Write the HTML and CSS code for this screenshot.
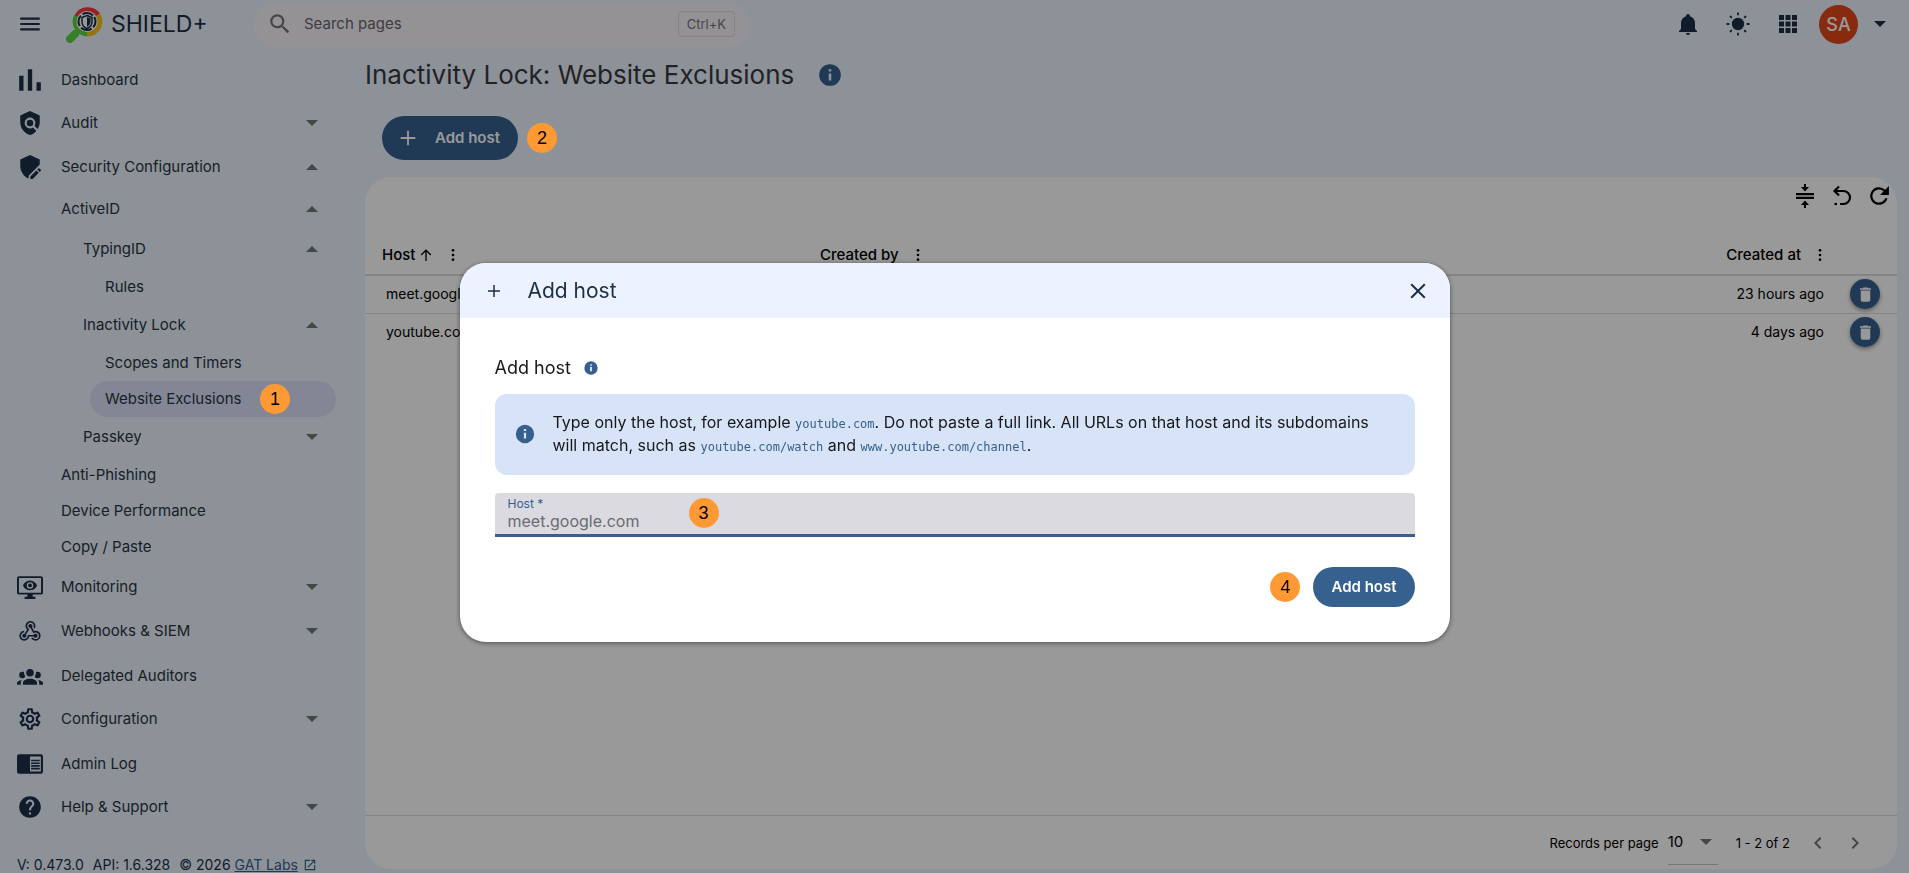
FILE: index.html
```html
<!DOCTYPE html>
<html lang="en">
<head>
<meta charset="UTF-8" />
<meta name="viewport" content="width=device-width, initial-scale=1" />
<title>SHIELD+ | Website Exclusions</title>
<link rel="stylesheet" href="styles.css">
</head>
<body>
<svg class="sprite" aria-hidden="true">
  <symbol id="i-info" viewBox="0 0 24 24"><path d="M12 2a10 10 0 1 0 0 20 10 10 0 0 0 0-20zm1.200 15h-2.400v-6.500h2.400V17zm0-8.200h-2.400V6.600h2.400v2.200z"/></symbol>
  <symbol id="i-plus" viewBox="0 0 24 24"><path d="M11 4h2v7h7v2h-7v7h-2v-7H4v-2h7z"/></symbol>
  <symbol id="i-dots" viewBox="0 0 24 24"><circle cx="12" cy="5" r="2"/><circle cx="12" cy="12" r="2"/><circle cx="12" cy="19" r="2"/></symbol>
  <symbol id="i-trash" viewBox="0 0 24 24"><path d="M6 19a2 2 0 0 0 2 2h8a2 2 0 0 0 2-2V7H6v12zM19 4h-3.500l-1-1h-5l-1 1H5v2h14V4z"/></symbol>
</svg>

<header class="topbar">
  <button class="icon-button menu-button" aria-label="Toggle menu">
    <svg viewBox="0 0 24 24"><path d="M3 18h18v-2H3v2zm0-5h18v-2H3v2zm0-7v2h18V6H3z"/></svg>
  </button>
  <a class="brand" href="#">
    <svg class="logo" viewBox="0 0 38 38" aria-hidden="true">
      <path d="M10 29 5 34" stroke="#5ad341" stroke-width="8" stroke-linecap="round"/>
      <g fill="none" stroke-width="5">
        <path d="M11.500 12A12.500 12.500 0 0 1 33 10" stroke="#ff3838"/>
        <path d="M33 10A12.500 12.500 0 0 1 22 29" stroke="#f5c51e"/>
        <path d="M22 29A12.500 12.500 0 0 1 11.500 11" stroke="#5ad341"/>
      </g>
      <circle cx="22" cy="16.500" r="10.500" fill="#fff"/>
      <circle cx="22" cy="16.500" r="8.500" fill="none" stroke="#1b2e46" stroke-width="2" stroke-dasharray="11.350 2" stroke-dashoffset="5"/>
      <path d="M22 10.500l5 2v4c0 3.500-2 6-5 7-3-1-5-3.500-5-7v-4z" fill="#fff" stroke="#1b2e46" stroke-width="1.500"/>
      <path d="M22 12v10c2-1 3.500-3 3.500-5.500v-3.200z" fill="#1b2e46"/>
    </svg>
    <span>SHIELD+</span>
  </a>
  <label class="search">
    <svg viewBox="0 0 24 24" aria-hidden="true"><path d="M15.500 14h-.79l-.28-.27A6.471 6.471 0 0 0 16 9.500 6.500 6.500 0 1 0 9.500 16c1.610 0 3.090-.59 4.230-1.570l.27.28v.79l5 4.990L20.490 19l-4.990-5zm-6 0C7.010 14 5 11.990 5 9.500S7.010 5 9.500 5 14 7.010 14 9.500 11.990 14 9.500 14z"/></svg>
    <input type="search" placeholder="Search pages" aria-label="Search pages" />
    <kbd>Ctrl+K</kbd>
  </label>
  <div class="topbar-actions">
    <button class="icon-button" aria-label="Notifications">
      <svg viewBox="0 0 24 24"><path d="M21 19v1H3v-1l2-2v-6c0-3.100 2.030-5.830 5-6.710V4a2 2 0 0 1 4 0v.29c2.970.88 5 3.610 5 6.710v6l2 2m-7 2a2 2 0 0 1-4 0"/></svg>
    </button>
    <button class="icon-button" aria-label="Theme">
      <svg viewBox="0 0 24 24"><circle cx="12" cy="12" r="6.200"/><g stroke="currentColor" stroke-width="1.800"><path d="M12 .5v2.800M12 20.700v2.800M.5 12h2.800M20.700 12h2.800M4 4l1.800 1.800M18.200 18.200 20 20M20 4l-1.800 1.800M5.800 18.200 4 20"/></g></svg>
    </button>
    <button class="icon-button" aria-label="Apps">
      <svg viewBox="0 0 24 24"><path d="M3 3h5v5H3zm6.500 0h5v5h-5zm6.500 0h5v5h-5zM3 9.500h5v5H3zm6.500 0h5v5h-5zm6.500 0h5v5h-5zM3 16h5v5H3zm6.500 0h5v5h-5zm6.500 0h5v5h-5z"/></svg>
    </button>
    <button class="account" aria-label="Account">
      <span class="avatar">SA</span>
      <span class="caret caret-dark"></span>
    </button>
  </div>
</header>

<div class="layout">
  <aside class="sidebar">
    <nav aria-label="Main">
      <a class="item plain" href="#">
        <svg viewBox="0 0 24 24"><path d="M2 8h4v14H2zm8-6h4v20h-4zm8 12h4v8h-4z"/></svg>
        <span>Dashboard</span>
      </a>
      <a class="item" href="#">
        <svg viewBox="0 0 24 24"><path d="M21 5l-9-4-9 4v6c0 5.550 3.840 10.740 9 12 2.300-.56 4.330-1.900 5.880-3.710l-3.120-3.120c-1.940 1.290-4.580 1.070-6.290-.64-1.950-1.950-1.950-5.120 0-7.070s5.120-1.950 7.070 0c1.710 1.710 1.920 4.350.64 6.290l2.900 2.900C20.290 15.690 21 13.380 21 11V5z"/><circle cx="12" cy="12" r="3"/></svg>
        <span>Audit</span>
        <i class="caret"></i>
      </a>
      <a class="item" href="#">
        <svg viewBox="0 0 24 24"><path d="M12 1 3 5v6c0 5 3.200 9.800 7.700 11.700v-2.600L21 9.800V5z"/><path d="M12.300 23v-2.200l5.600-5.600 2.200 2.200-5.600 5.600zM18.700 14.400l1.100-1.100a.7.7 0 0 1 1 0l1.200 1.200a.7.7 0 0 1 0 1l-1.100 1.100z"/></svg>
        <span>Security Configuration</span>
        <i class="caret up"></i>
      </a>
      <a class="item sub" href="#"><span>ActiveID</span><i class="caret up"></i></a>
      <a class="item sub level-2" href="#"><span>TypingID</span><i class="caret up"></i></a>
      <a class="item leaf level-3" href="#"><span>Rules</span></a>
      <a class="item sub level-2" href="#"><span>Inactivity Lock</span><i class="caret up"></i></a>
      <a class="item leaf level-3" href="#"><span>Scopes and Timers</span></a>
      <a class="item leaf level-3 active" href="#" aria-current="page"><span>Website Exclusions</span><b class="step step-1">1</b></a>
      <a class="item sub level-2" href="#"><span>Passkey</span><i class="caret"></i></a>
      <a class="item leaf" href="#"><span>Anti-Phishing</span></a>
      <a class="item leaf" href="#"><span>Device Performance</span></a>
      <a class="item leaf" href="#"><span>Copy / Paste</span></a>
      <a class="item" href="#">
        <svg viewBox="0 0 24 24"><path fill-rule="evenodd" d="M2 2h20a2 2 0 0 1 2 2v13a2 2 0 0 1-2 2h-7.500v2H17v2H7v-2h2.500v-2H2a2 2 0 0 1-2-2V4a2 2 0 0 1 2-2zm-.2 1.800v13.400h20.400V3.800zM12 6c3 0 5.500 2 6.500 4.500C17.500 13 15 15 12 15s-5.500-2-6.500-4.500C6.500 8 9 6 12 6zm0 1.500a3 3 0 1 0 0 6 3 3 0 0 0 0-6z"/><circle cx="12" cy="10.500" r="1.800"/></svg>
        <span>Monitoring</span>
        <i class="caret"></i>
      </a>
      <a class="item" href="#">
        <svg viewBox="0 0 24 24"><path d="M10.460 19C9 21.070 6.150 21.590 4.090 20.150C2.040 18.710 1.560 15.840 3 13.750C3.870 12.500 5.210 11.830 6.580 11.770L6.630 13.200C5.720 13.270 4.840 13.740 4.270 14.560C3.270 16 3.580 17.940 4.950 18.910C6.330 19.870 8.260 19.500 9.260 18.070C9.570 17.620 9.750 17.130 9.820 16.630V15.620L15.400 15.580L15.470 15.470C16 14.550 17.150 14.230 18.050 14.750C18.950 15.270 19.260 16.430 18.730 17.350C18.200 18.260 17.040 18.580 16.140 18.060C15.730 17.830 15.440 17.460 15.310 17.040L11.240 17.060C11.130 17.730 10.870 18.380 10.460 19M17.740 11.860C20.270 12.170 22.070 14.440 21.760 16.930C21.450 19.430 19.150 21.200 16.620 20.890C15.130 20.710 13.900 19.860 13.190 18.680L14.430 17.960C14.920 18.730 15.750 19.280 16.750 19.410C18.500 19.620 20.050 18.430 20.260 16.760C20.470 15.090 19.230 13.560 17.500 13.350C16.960 13.290 16.440 13.360 15.970 13.530L15.120 13.970L12.540 9.200H12.320C11.260 9.160 10.410 8.290 10.440 7.250C10.470 6.210 11.400 5.400 12.450 5.440C13.500 5.500 14.330 6.350 14.300 7.390C14.280 7.830 14.110 8.230 13.840 8.540L15.740 12.050C16.360 11.850 17.040 11.780 17.740 11.860M8.250 9.140C7.250 6.790 8.310 4.100 10.620 3.120C12.940 2.140 15.620 3.250 16.620 5.600C17.210 6.970 17.090 8.470 16.420 9.670L15.180 8.950C15.600 8.140 15.670 7.150 15.270 6.220C14.590 4.620 12.780 3.850 11.230 4.500C9.670 5.160 8.970 7 9.650 8.600C9.930 9.260 10.400 9.770 10.970 10.110L11.360 10.320L8.290 15.310C8.320 15.360 8.360 15.420 8.390 15.500C8.880 16.410 8.540 17.560 7.620 18.050C6.710 18.540 5.560 18.180 5.060 17.240C4.570 16.310 4.910 15.160 5.830 14.670C6.220 14.460 6.650 14.410 7.060 14.500L9.370 10.730C8.900 10.300 8.500 9.760 8.250 9.140Z"/></svg>
        <span>Webhooks &amp; SIEM</span>
        <i class="caret"></i>
      </a>
      <a class="item plain" href="#">
        <svg viewBox="0 0 24 24"><path d="M12 5.500A3.500 3.500 0 0 1 15.500 9A3.500 3.500 0 0 1 12 12.500A3.500 3.500 0 0 1 8.500 9A3.500 3.500 0 0 1 12 5.500M5 8C5.560 8 6.080 8.150 6.530 8.420C6.380 9.850 6.800 11.270 7.660 12.380C7.160 13.340 6.160 14 5 14A3 3 0 0 1 2 11A3 3 0 0 1 5 8M19 8A3 3 0 0 1 22 11A3 3 0 0 1 19 14C17.840 14 16.840 13.340 16.340 12.380C17.200 11.270 17.620 9.850 17.470 8.420C17.920 8.150 18.440 8 19 8M5.500 18.250C5.500 16.180 8.410 14.500 12 14.500C15.590 14.500 18.500 16.180 18.500 18.250V20H5.500V18.250M0 20V18.500C0 17.110 1.890 15.940 4.450 15.600C3.860 16.280 3.500 17.220 3.500 18.250V20H0M24 20H20.500V18.250C20.500 17.220 20.140 16.280 19.550 15.600C22.110 15.940 24 17.110 24 18.500V20Z"/></svg>
        <span>Delegated Auditors</span>
      </a>
      <a class="item" href="#">
        <svg viewBox="0 0 24 24"><path d="M12 8A4 4 0 0 1 16 12A4 4 0 0 1 12 16A4 4 0 0 1 8 12A4 4 0 0 1 12 8M12 10A2 2 0 0 0 10 12A2 2 0 0 0 12 14A2 2 0 0 0 14 12A2 2 0 0 0 12 10M10 22C9.750 22 9.540 21.820 9.500 21.580L9.130 18.930C8.500 18.680 7.960 18.340 7.440 17.940L4.950 18.950C4.730 19.030 4.460 18.950 4.340 18.730L2.340 15.270C2.210 15.050 2.270 14.780 2.460 14.630L4.570 12.970L4.500 12L4.570 11L2.460 9.370C2.270 9.220 2.210 8.950 2.340 8.730L4.340 5.270C4.460 5.050 4.730 4.960 4.950 5.050L7.440 6.050C7.960 5.660 8.500 5.320 9.130 5.070L9.500 2.420C9.540 2.180 9.750 2 10 2H14C14.250 2 14.460 2.180 14.500 2.420L14.870 5.070C15.500 5.320 16.040 5.660 16.560 6.050L19.050 5.050C19.270 4.960 19.540 5.050 19.660 5.270L21.660 8.730C21.790 8.950 21.730 9.220 21.540 9.370L19.430 11L19.500 12L19.430 13L21.540 14.630C21.730 14.780 21.790 15.050 21.660 15.270L19.660 18.730C19.540 18.950 19.270 19.040 19.050 18.950L16.560 17.950C16.040 18.340 15.500 18.680 14.870 18.930L14.500 21.580C14.460 21.820 14.250 22 14 22H10M11.250 4L10.880 6.610C9.680 6.860 8.620 7.500 7.850 8.390L5.440 7.350L4.690 8.650L6.800 10.200C6.400 11.370 6.400 12.640 6.800 13.800L4.680 15.360L5.430 16.660L7.860 15.620C8.630 16.500 9.680 17.140 10.870 17.380L11.240 20H12.760L13.130 17.390C14.320 17.140 15.370 16.500 16.140 15.620L18.570 16.660L19.320 15.360L17.200 13.810C17.600 12.640 17.600 11.370 17.200 10.200L19.310 8.650L18.560 7.350L16.150 8.390C15.380 7.500 14.320 6.860 13.120 6.620L12.750 4H11.250Z"/></svg>
        <span>Configuration</span>
        <i class="caret"></i>
      </a>
      <a class="item plain" href="#">
        <svg viewBox="0 0 24 24"><path fill-rule="evenodd" d="M2 3h20a2 2 0 0 1 2 2v14a2 2 0 0 1-2 2H2a2 2 0 0 1-2-2V5a2 2 0 0 1 2-2zm10 2v14h10V5z"/><path d="M13 8h8v1.500h-8zm0 2.500h8V12h-8zm0 2.500h8v1.500h-8zm0 2.500h8V17h-8z"/></svg>
        <span>Admin Log</span>
      </a>
      <a class="item" href="#">
        <svg viewBox="0 0 24 24"><path d="M12 2C6.480 2 2 6.480 2 12s4.480 10 10 10 10-4.480 10-10S17.520 2 12 2zm1 17h-2v-2h2v2zm2.070-7.750l-.9.92C13.450 12.900 13 13.500 13 15h-2v-.5c0-1.100.45-2.100 1.170-2.830l1.240-1.260c.37-.36.59-.86.59-1.410 0-1.100-.9-2-2-2s-2 .9-2 2H8c0-2.210 1.790-4 4-4s4 1.790 4 4c0 .88-.36 1.680-.93 2.250z"/></svg>
        <span>Help &amp; Support</span>
        <i class="caret"></i>
      </a>
    </nav>
    <footer class="version">
      <span>V: 0.473.0</span>
      <span>API: 1.6.328</span>
      <span>© 2026 <a href="#">GAT Labs</a></span>
      <svg viewBox="0 0 24 24" aria-hidden="true"><path d="M19 19H5V5h7V3H3v18h18v-9h-2v7zM14 3v2h3.600l-9.800 9.800 1.400 1.400L19 6.400V10h2V3h-7z"/></svg>
    </footer>
  </aside>

  <main class="content">
    <div class="page-title">
      <h1>Inactivity Lock: Website Exclusions</h1>
      <svg viewBox="0 0 24 24"><use href="#i-info"/></svg>
    </div>
    <div class="page-actions">
      <button class="button button-large"><svg viewBox="0 0 24 24"><use href="#i-plus"/></svg>Add host</button>
      <b class="step step-2">2</b>
    </div>

    <section class="card">
      <div class="card-tools">
        <button class="icon-button" aria-label="Density">
          <svg viewBox="0 0 24 24"><path d="M3 9h18v2.200H3zm0 3.800h18V15H3zM11 0h2v3h3l-4 4.500L8 3h3zM11 24h2v-3h3l-4-4.500L8 21h3z"/></svg>
        </button>
        <button class="icon-button" aria-label="Reset table">
          <svg viewBox="0 0 24 24"><g fill="none" stroke="currentColor" stroke-width="2.200"><path d="M9 2.500 4.500 7 9 11.500M5 7h8.500a6.500 6.500 0 0 1 0 13H10"/></g><path d="M4.500 18.900h2.500v2.200H4.500z"/></svg>
        </button>
        <button class="icon-button" aria-label="Refresh">
          <svg viewBox="0 0 24 24"><path d="M17.650 6.350A8 8 0 1 0 19.730 14h-2.080A6 6 0 1 1 12 6c1.660 0 3.140.69 4.220 1.780L13 11h8V3l-3.350 3.350z" transform="translate(-1.200 -1.200) scale(1.100)"/></svg>
        </button>
      </div>
      <table class="hosts">
        <thead>
          <tr>
            <th><span class="th">Host <svg class="sort" viewBox="0 0 24 24"><path d="M11 21V7l-5.600 5.600L4 11.200l8-8 8 8-1.400 1.400L13 7v14z"/></svg><svg class="dots" viewBox="0 0 24 24"><use href="#i-dots"/></svg></span></th>
            <th><span class="th">Created by <svg class="dots" viewBox="0 0 24 24"><use href="#i-dots"/></svg></span></th>
            <th class="right"><span class="th">Created at <svg class="dots" viewBox="0 0 24 24"><use href="#i-dots"/></svg></span></th>
            <th></th>
          </tr>
        </thead>
        <tbody>
          <tr>
            <td>meet.google.com</td>
            <td></td>
            <td class="right">23 hours ago</td>
            <td><button class="delete" aria-label="Delete meet.google.com"><svg viewBox="0 0 24 24"><use href="#i-trash"/></svg></button></td>
          </tr>
          <tr>
            <td>youtube.com</td>
            <td></td>
            <td class="right">4 days ago</td>
            <td><button class="delete" aria-label="Delete youtube.com"><svg viewBox="0 0 24 24"><use href="#i-trash"/></svg></button></td>
          </tr>
        </tbody>
      </table>
      <div class="pager">
        <label for="page-size">Records per page</label>
        <span class="page-size">
          <select id="page-size"><option>10</option><option>25</option><option>50</option></select>
          <i class="caret"></i>
        </span>
        <span class="range">1 - 2 of 2</span>
        <button class="icon-button" aria-label="Previous page"><svg viewBox="0 0 24 24"><path d="M15.400 7.400 14 6l-6 6 6 6 1.400-1.400L10.800 12z"/></svg></button>
        <button class="icon-button" aria-label="Next page"><svg viewBox="0 0 24 24"><path d="M10 6 8.600 7.400l4.600 4.600-4.600 4.600L10 18l6-6z"/></svg></button>
      </div>
    </section>
  </main>
</div>

<div class="backdrop">
  <div class="dialog" role="dialog" aria-modal="true" aria-labelledby="dialog-title">
    <div class="dialog-header">
      <svg class="dialog-plus" viewBox="0 0 24 24"><use href="#i-plus"/></svg>
      <h2 id="dialog-title">Add host</h2>
      <button class="icon-button" aria-label="Close"><svg viewBox="0 0 24 24"><path d="M19.500 5.900 18.100 4.500 12 10.600 5.900 4.500 4.500 5.900l6.100 6.100-6.100 6.100 1.400 1.400 6.100-6.100 6.100 6.100 1.400-1.400-6.100-6.100z"/></svg></button>
    </div>
    <form class="dialog-body">
      <h3>Add host <svg viewBox="0 0 24 24"><use href="#i-info"/></svg></h3>
      <div class="note">
        <svg viewBox="0 0 24 24"><use href="#i-info"/></svg>
        <p>Type only the host, for example <code>youtube.com</code>. Do not paste a full link. All URLs on that host and its subdomains will match, such as <code>youtube.com/watch</code> and <code>www.youtube.com/channel</code>.</p>
      </div>
      <div class="field">
        <label for="host">Host *</label>
        <input id="host" type="text" placeholder="meet.google.com" required />
        <b class="step step-3">3</b>
      </div>
      <div class="dialog-actions">
        <b class="step">4</b>
        <button class="button" type="button">Add host</button>
      </div>
    </form>
  </div>
</div>
</body>
</html>
```
FILE: styles.css
```css
:root {
  --color-bg: #ecf3ff;
  --color-primary: #36618e;
  --color-dark: #1b2f47;
  --color-text: #2b3540;
  --color-step: #ff9933;
  --sidebar-width: 365px;
}

*, *::before, *::after {
  box-sizing: border-box;
}

body {
  margin: 0;
  height: 100vh;
  display: flex;
  flex-direction: column;
  overflow: hidden;
  background-color: var(--color-bg);
  color: var(--color-text);
  font-family: Inter, Roboto, sans-serif;
  font-size: 15px;
  line-height: 24px;
}

h1, h2, h3, p {
  margin: 0;
  font-weight: 400;
}

a {
  color: inherit;
  text-decoration: none;
}

button, input, select {
  font: inherit;
  color: inherit;
}

svg {
  fill: currentColor;
  flex: none;
}

.sprite {
  display: none;
}

.icon-button {
  display: flex;
  padding: 0;
  border: none;
  background: none;
  color: inherit;
  cursor: pointer;
}
.icon-button svg {
  width: 24px;
  height: 24px;
}

.caret {
  flex: none;
  border: 6px solid transparent;
  border-top-color: #757575;
  border-bottom: none;
}
.caret.up {
  border-top: none;
  border-bottom: 6px solid #757575;
}
.caret-dark {
  border-top-color: var(--color-dark);
}

/* Walkthrough step markers */
.step {
  width: 30px;
  height: 30px;
  border-radius: 50%;
  background-color: var(--color-step);
  color: #000;
  font: 18px/30px "Liberation Sans", Arial, sans-serif;
  text-align: center;
}
.step-1, .step-2, .step-3 {
  position: absolute;
  z-index: 20;
}

/* Top bar */
.topbar {
  display: flex;
  align-items: center;
  height: 48px;
  padding: 0 20px 0 17px;
  color: var(--color-dark);
}
.menu-button svg {
  width: 26px;
  height: 26px;
}
.brand {
  display: flex;
  align-items: center;
  gap: 8px;
  width: 189px;
  margin-left: 22px;
  font-size: 23px;
}
.logo {
  width: 38px;
  height: 38px;
}
.search {
  display: flex;
  align-items: center;
  width: 495px;
  height: 45px;
  padding: 0 14px 0 13px;
  border-radius: 23px;
  background-color: #f8f3fa;
  color: #73737a;
}
.search svg {
  width: 26px;
  height: 26px;
}
.search input {
  flex: 1;
  min-width: 0;
  padding: 0;
  margin-left: 11px;
  border: none;
  outline: none;
  background: none;
}
.search input::placeholder {
  color: #66666c;
  opacity: 1;
}
.search kbd {
  padding: 0 8px;
  border: 1px solid #dedae2;
  border-radius: 4px;
  font-family: inherit;
  font-size: 13px;
}
.topbar-actions {
  display: flex;
  align-items: center;
  gap: 24px;
  margin-left: auto;
}
.topbar-actions .icon-button svg {
  width: 26px;
  height: 24px;
}
.account {
  display: flex;
  align-items: center;
  gap: 16px;
  padding: 0 3px 0 0;
  margin-left: -6px;
  border: none;
  background: none;
}
.avatar {
  width: 39px;
  height: 39px;
  border-radius: 50%;
  background-color: #e1461b;
  color: #fff;
  font-size: 18px;
  font-weight: 500;
  line-height: 39px;
}

.layout {
  flex: 1;
  display: flex;
  min-height: 0;
}

/* Sidebar */
.sidebar {
  display: flex;
  flex-direction: column;
  width: var(--sidebar-width);
  padding-top: 9px;
  color: var(--color-dark);
}
.item {
  display: flex;
  align-items: center;
  height: 44px;
  padding-left: 17px;
  padding-right: 47px;
  color: var(--color-text);
}
.item svg {
  width: 26px;
  height: 26px;
  margin-right: 18px;
  color: var(--color-dark);
}
.item .caret {
  margin-left: auto;
}
.item.plain {
  padding-top: 2px;
}
.item.sub {
  height: 40px;
  padding-left: 61px;
}
.item.leaf {
  height: 36px;
  padding-left: 61px;
}
.item.level-2 {
  padding-left: 83px;
}
.item.level-3 {
  padding-left: 105px;
}
.item.active {
  position: relative;
  margin-left: 90px;
  margin-right: 29px;
  padding-left: 15px;
  border-radius: 18px;
  background-color: #dae1f8;
}
.step-1 {
  left: 170px;
  top: 3px;
}
.version {
  display: flex;
  align-items: center;
  gap: 9px;
  margin-top: auto;
  padding-left: 17px;
  height: 16px;
  font-size: 14px;
  white-space: nowrap;
}
.version a {
  color: var(--color-primary);
  text-decoration: underline;
}
.version svg {
  width: 14px;
  height: 14px;
  margin-left: -4px;
  color: var(--color-primary);
}

/* Content */
.content {
  flex: 1;
  display: flex;
  flex-direction: column;
  min-width: 0;
  padding: 10px 12px 4px 0;
}
.page-title {
  display: flex;
  align-items: center;
  gap: 23px;
  height: 34px;
}
.page-title h1 {
  font-size: 26px;
  line-height: 34px;
  color: #3a3a3e;
}
.page-title svg {
  width: 26px;
  height: 26px;
  color: var(--color-primary);
}
.page-actions {
  position: relative;
  display: flex;
  padding: 24px 17px 17px;
}
.step-2 {
  left: 162px;
  top: 31px;
}
.button {
  height: 40px;
  padding: 0 18px;
  border: none;
  border-radius: 20px;
  background-color: var(--color-primary);
  color: #fff;
  font-weight: 600;
  cursor: pointer;
}
.button-large {
  display: flex;
  align-items: center;
  gap: 16px;
  height: 44px;
  padding: 0 18px 0 15px;
  border-radius: 22px;
}
.button-large svg {
  width: 22px;
  height: 22px;
}

.card {
  flex: 1;
  display: flex;
  flex-direction: column;
  min-height: 0;
  border-radius: 26px;
  background-color: #fff;
  color: #000;
}
.card-tools {
  display: flex;
  justify-content: flex-end;
  gap: 13px;
  padding: 7px 6px 27px;
}

.hosts {
  width: 100%;
  table-layout: fixed;
  border-collapse: collapse;
}
.hosts th {
  height: 40px;
  padding: 0 17px;
  border-bottom: 2px solid #dcdcdc;
  font-size: 15px;
  font-weight: 500;
  text-align: left;
}
.hosts th:nth-child(1) {
  width: 438px;
}
.hosts th:nth-child(4) {
  width: 63px;
}
.hosts td {
  height: 38px;
  padding: 0 10px 0 21px;
  font-size: 14px;
}
.hosts td:last-child {
  padding: 0 16px;
}
.hosts tbody tr + tr td {
  border-top: 1px solid #dcdcdc;
}
.hosts .right {
  padding-right: 10px;
  text-align: right;
}
.th {
  display: inline-flex;
  align-items: center;
}
.sort {
  width: 16px;
  height: 16px;
  margin-left: 3px;
}
.dots {
  width: 16px;
  height: 16px;
  margin-left: 11px;
}
.right .dots {
  margin-right: -4px;
}
.delete {
  display: flex;
  align-items: center;
  justify-content: center;
  width: 30px;
  height: 30px;
  padding: 0;
  border: none;
  border-radius: 50%;
  background-color: var(--color-primary);
  box-shadow: 0 2px 4px rgba(0, 0, 0, 0.4);
  color: #fff;
}
.delete svg {
  width: 19px;
  height: 19px;
}

.pager {
  display: flex;
  align-items: center;
  justify-content: flex-end;
  height: 54px;
  margin-top: auto;
  padding-right: 30px;
  border-top: 1px solid #dcdcdc;
  font-size: 13px;
}
.page-size {
  display: flex;
  align-items: center;
  width: 50px;
  height: 45px;
  margin: 0 18px 0 9px;
  border-bottom: 1px solid #c4c4c4;
  font-size: 15px;
}
.page-size select {
  flex: 1;
  padding: 0;
  border: none;
  background: none;
  appearance: none;
}
.page-size .caret {
  margin-right: 6px;
}
.pager .icon-button {
  color: #757575;
}
.pager .range {
  margin-right: 16px;
}
.pager .icon-button + .icon-button {
  margin-left: 13px;
}

/* Dialog */
.backdrop {
  position: fixed;
  inset: 0;
  z-index: 10;
  display: flex;
  align-items: center;
  justify-content: center;
  padding-top: 32px;
  background-color: rgba(0, 0, 0, 0.4);
}
.dialog {
  width: 990px;
  max-width: 90vw;
  overflow: hidden;
  border-radius: 26px;
  background-color: #fff;
  box-shadow: 0 1px 5px rgba(0, 0, 0, 0.5);
  color: #16181c;
}
.dialog-header {
  display: flex;
  align-items: center;
  height: 55px;
  padding: 0 20px 0 25px;
  background-color: #ecf2ff;
  color: var(--color-dark);
}
.dialog-header h2 {
  flex: 1;
  margin-left: 25px;
  font-size: 21px;
}
.dialog-plus {
  width: 18px;
  height: 18px;
}
.dialog-body {
  padding: 36px 35px 35px;
}
.dialog-body h3 {
  display: flex;
  align-items: center;
  gap: 12px;
  font-size: 18px;
  line-height: 28px;
}
.dialog-body h3 svg {
  width: 16px;
  height: 16px;
  color: var(--color-primary);
}
.note {
  display: flex;
  align-items: center;
  gap: 17px;
  margin-top: 12px;
  padding: 17px 19px 18px;
  border-radius: 12px;
  background-color: #d7e3f7;
}
.note svg {
  width: 22px;
  height: 22px;
  color: var(--color-primary);
}
.note p {
  font-size: 16px;
  line-height: 23px;
}
.note code {
  font-family: "DejaVu Sans Mono", monospace;
  font-size: 12px;
  line-height: 16px;
  color: var(--color-primary);
}
.field {
  position: relative;
  display: flex;
  flex-direction: column;
  height: 44px;
  margin-top: 18px;
  padding: 4px 13px 0;
  border-bottom: 3px solid var(--color-primary);
  border-radius: 4px 4px 0 0;
  background-color: #dadae0;
}
.field label {
  font-size: 12px;
  line-height: 14px;
  color: var(--color-primary);
}
.field input {
  height: 20px;
  padding: 0;
  border: none;
  outline: none;
  background: none;
  font-size: 16px;
}
.field input::placeholder {
  color: #6b6b70;
  opacity: 1;
}
.step-3 {
  left: 194px;
  top: 5px;
}
.dialog-actions {
  display: flex;
  align-items: center;
  justify-content: flex-end;
  gap: 13px;
  margin-top: 30px;
}

/* Responsive */
@media (max-width: 1100px) {
  .search {
    width: 260px;
  }
  .hosts th:nth-child(1) {
    width: 40%;
  }
}
```
